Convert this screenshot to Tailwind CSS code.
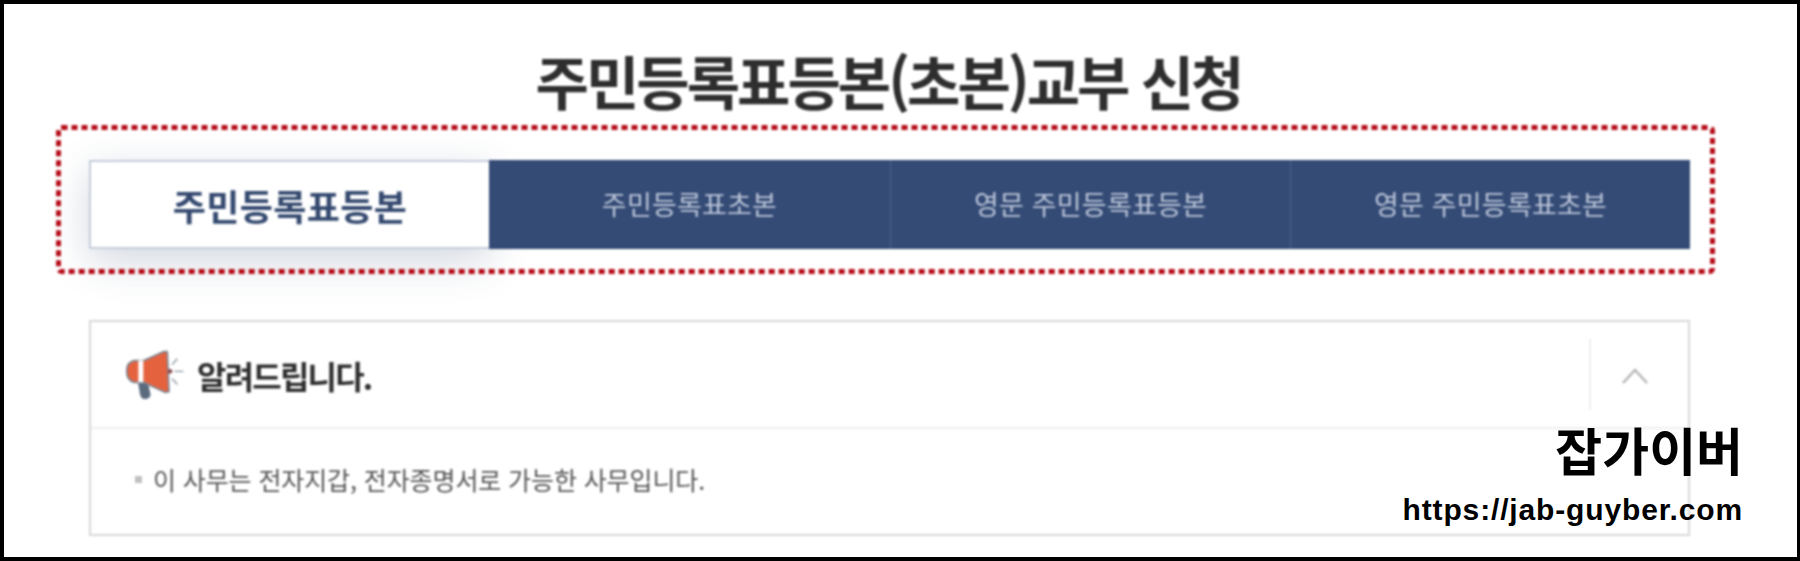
<!DOCTYPE html>
<html lang="ko">
<head>
  <meta charset="UTF-8" />
  <title>주민등록표등본(초본)교부 신청</title>
  <script src="https://cdn.jsdelivr.net/npm/@tailwindcss/browser@4"></script>
</head>
<body class="bg-black overflow-hidden">
  <div class="relative w-[1800px] h-[561px] bg-white border-t-4 border-b-4 border-l-4 border-r-[3px] border-black font-['Noto_Sans_CJK_KR','Noto_Sans',sans-serif]">
    <div class="ml-[85px] w-[1601px] blur-[0.8px]">

      <!-- Title -->
      <h1 class="mt-[44px] mb-[48px] h-[64px] flex items-center justify-center pr-[2px] text-[58px] font-bold tracking-[-3px] text-[#2e2e2e] leading-none">주민등록표등본(초본)교부 신청</h1>

      <!-- Tabs -->
      <div class="relative">
        <div class="flex h-[89px]">
          <div class="w-[400px] flex items-center justify-center bg-white border-2 border-[#c5cddb] border-r-0 text-[36px] font-bold tracking-[0.4px] text-[#34496f] shadow-[0_12px_40px_rgba(52,73,111,0.22)]">주민등록표등본</div>
          <div class="w-[401px] flex items-center justify-center bg-[#344b76] text-[27px] tracking-[0.2px] text-[#bcc6d8]">주민등록표초본</div>
          <div class="w-[400px] flex items-center justify-center bg-[#344b76] border-l border-[#4d628a] text-[27px] tracking-[0.2px] text-[#bcc6d8]">영문 주민등록표등본</div>
          <div class="w-[400px] flex items-center justify-center bg-[#344b76] border-l border-[#4d628a] text-[27px] tracking-[0.2px] text-[#bcc6d8]">영문 주민등록표초본</div>
        </div>
        <svg class="absolute -left-[33px] -top-[35px]" width="1659" height="149" fill="none">
          <rect x="2.5" y="2.5" width="1654" height="144" rx="3" stroke="#b50c18" stroke-width="5" stroke-dasharray="6 4" />
        </svg>
      </div>

      <!-- Notice -->
      <div class="mt-[71px] h-[216px] border-2 border-[#d8d8d8]">
        <div class="flex h-[107px] border-b-2 border-[#eeeeee]">
          <div class="flex flex-1 items-center pl-[34px]">
            <svg width="60" height="52" viewBox="45 30 180 156" fill="none">
              <path d="M84 130 L112 122 L122 168 Q118 182 102 180 Q92 178 90 166 Z" fill="#5b6b7e" />
              <path d="M160 38 L172 38 L177 158 L165 160 L100 130 L72 130 Q50 124 50 97 Q50 70 72 65 L100 65 Z" fill="#e5623f" stroke="#7c8794" stroke-width="5" stroke-linejoin="round" />
              <rect x="85" y="64" width="15" height="66" fill="#fff" />
              <circle cx="180" cy="97" r="7" fill="#8c4a52" />
              <path d="M187 76 L201 60 M195 97 L219 97 M187 120 L201 135" stroke="#8a95a2" stroke-width="4" stroke-linecap="round" />
            </svg>
            <span class="ml-[12px] text-[32px] font-bold tracking-[-1.8px] text-[#2e2e2e]">알려드립니다.</span>
          </div>
          <div class="self-start mt-[17px] w-[99px] h-[71px] pr-[9px] pt-[2px] border-l-2 border-[#efefef] flex items-center justify-center">
            <svg width="28" height="18" viewBox="0 0 28 18" fill="none">
              <path d="M2 16 L14 3 L26 16" stroke="#b5b5b5" stroke-width="2.5" />
            </svg>
          </div>
        </div>
        <div class="flex items-center pl-[44px] pt-[38px]">
          <span class="w-[7px] h-[7px] bg-[#c0c0c0]"></span>
          <span class="ml-[11px] text-[25px] tracking-[-0.1px] text-[#555] leading-none">이 사무는 전자지갑, 전자종명서로 가능한 사무입니다.</span>
        </div>
      </div>
    </div>

    <!-- Watermark -->
    <div class="absolute right-[54px] top-[418px] text-right text-black">
      <div class="text-[51px] font-bold leading-[54px]">잡가이버</div>
      <div class="mt-[17px] font-['Liberation_Sans',sans-serif] text-[30px] font-bold leading-[34px] tracking-[0.85px]">https://jab-guyber.com</div>
    </div>
  </div>
</body>
</html>
